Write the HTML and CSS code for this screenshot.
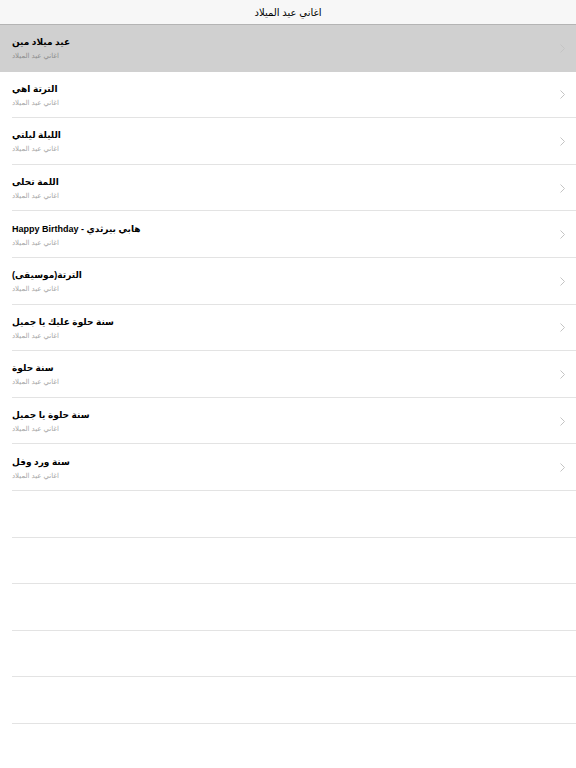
FILE: index.html
```html
<!DOCTYPE html>
<html lang="ar">
<head>
    <meta charset="UTF-8">
    <meta name="viewport" content="width=device-width, initial-scale=1.0">
    <title>اغاني عيد الميلاد</title>
    <link rel="stylesheet" href="styles.css">
</head>
<body>
    <div class="navbar">
        <h1 class="nav-title">اغاني عيد الميلاد</h1>
    </div>

    <ul class="song-list">
        <li class="song-row selected">
            <div class="song-text">
                <span class="song-title">عيد ميلاد مين</span>
                <span class="song-sub">اغاني عيد الميلاد</span>
            </div>
            <svg class="chevron" viewBox="0 0 5 9"><polyline points="0.5,0.5 4.5,4.5 0.5,8.5"/></svg>
        </li>
        <li class="song-row">
            <div class="song-text">
                <span class="song-title">الترتة اهي</span>
                <span class="song-sub">اغاني عيد الميلاد</span>
            </div>
            <svg class="chevron" viewBox="0 0 5 9"><polyline points="0.5,0.5 4.5,4.5 0.5,8.5"/></svg>
        </li>
        <li class="song-row">
            <div class="song-text">
                <span class="song-title">الليلة ليلتي</span>
                <span class="song-sub">اغاني عيد الميلاد</span>
            </div>
            <svg class="chevron" viewBox="0 0 5 9"><polyline points="0.5,0.5 4.5,4.5 0.5,8.5"/></svg>
        </li>
        <li class="song-row">
            <div class="song-text">
                <span class="song-title">اللمة تحلى</span>
                <span class="song-sub">اغاني عيد الميلاد</span>
            </div>
            <svg class="chevron" viewBox="0 0 5 9"><polyline points="0.5,0.5 4.5,4.5 0.5,8.5"/></svg>
        </li>
        <li class="song-row">
            <div class="song-text">
                <span class="song-title">هابي بيرثدي - Happy Birthday</span>
                <span class="song-sub">اغاني عيد الميلاد</span>
            </div>
            <svg class="chevron" viewBox="0 0 5 9"><polyline points="0.5,0.5 4.5,4.5 0.5,8.5"/></svg>
        </li>
        <li class="song-row">
            <div class="song-text">
                <span class="song-title">الترتة(موسيقى)</span>
                <span class="song-sub">اغاني عيد الميلاد</span>
            </div>
            <svg class="chevron" viewBox="0 0 5 9"><polyline points="0.5,0.5 4.5,4.5 0.5,8.5"/></svg>
        </li>
        <li class="song-row">
            <div class="song-text">
                <span class="song-title">سنة حلوة عليك يا جميل</span>
                <span class="song-sub">اغاني عيد الميلاد</span>
            </div>
            <svg class="chevron" viewBox="0 0 5 9"><polyline points="0.5,0.5 4.5,4.5 0.5,8.5"/></svg>
        </li>
        <li class="song-row">
            <div class="song-text">
                <span class="song-title">سنة حلوة</span>
                <span class="song-sub">اغاني عيد الميلاد</span>
            </div>
            <svg class="chevron" viewBox="0 0 5 9"><polyline points="0.5,0.5 4.5,4.5 0.5,8.5"/></svg>
        </li>
        <li class="song-row">
            <div class="song-text">
                <span class="song-title">سنة حلوة يا جميل</span>
                <span class="song-sub">اغاني عيد الميلاد</span>
            </div>
            <svg class="chevron" viewBox="0 0 5 9"><polyline points="0.5,0.5 4.5,4.5 0.5,8.5"/></svg>
        </li>
        <li class="song-row">
            <div class="song-text">
                <span class="song-title">سنة ورد وفل</span>
                <span class="song-sub">اغاني عيد الميلاد</span>
            </div>
            <svg class="chevron" viewBox="0 0 5 9"><polyline points="0.5,0.5 4.5,4.5 0.5,8.5"/></svg>
        </li>
        <!-- empty rows of the table -->
        <li class="song-row empty"></li>
        <li class="song-row empty"></li>
        <li class="song-row empty"></li>
        <li class="song-row empty"></li>
        <li class="song-row empty"></li>
    </ul>
</body>
</html>
```

FILE: styles.css
```css
body {
    font-family: "Liberation Sans", "DejaVu Sans", sans-serif;
    background-color: #fff;
    margin: 0;
    padding: 0;
    overflow: hidden;
}
.navbar {
    height: 25px;
    background-color: #f7f7f7;
    border-bottom: 1px solid #b4b4b4;
    display: flex;
    align-items: center;
    justify-content: center;
    box-sizing: border-box;
}
.nav-title {
    margin: 0;
    font-size: 10px;
    font-weight: normal;
    color: #000;
}
.song-list {
    list-style: none;
    margin: 0;
    padding: 0;
}
.song-row {
    height: 46.6px;
    box-sizing: border-box;
    padding: 0 12px;
    display: flex;
    align-items: center;
    justify-content: space-between;
    position: relative;
}
.song-row::after {
    content: "";
    position: absolute;
    left: 12px;
    right: 0;
    bottom: 0;
    border-bottom: 1px solid #e3e3e3;
}
.song-row.selected {
    background-color: #d0d0d0;
}
.song-row.selected::after {
    border-bottom-color: #d0d0d0;
}
.song-text {
    display: flex;
    flex-direction: column;
    gap: 5px;
    margin-top: 1px;
}
.song-title {
    direction: rtl;
    text-align: left;
    font-size: 9px;
    font-weight: bold;
    color: #000;
}
.song-sub {
    direction: rtl;
    text-align: left;
    font-size: 7px;
    color: #a6a6a6;
}
.selected .song-sub {
    color: #8e8e8e;
}
.chevron {
    width: 5px;
    height: 9px;
    margin-right: -1px;
    fill: none;
    stroke: #c4c4c4;
    stroke-width: 1;
}
```
